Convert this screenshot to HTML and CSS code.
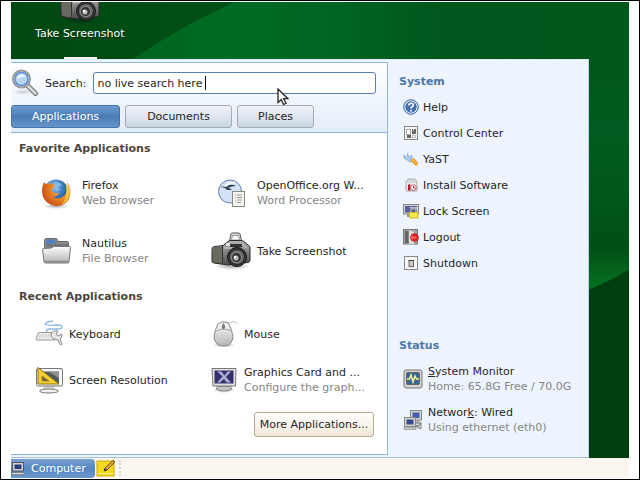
FILE: index.html
```html
<!DOCTYPE html>
<html lang="en">
<head>
<meta charset="utf-8">
<title>Computer menu</title>
<link rel="stylesheet" href="styles.css">
</head>
<body>
<svg class="defs" aria-hidden="true">
  <defs>
    <linearGradient id="g-metal" x1="0" y1="0" x2="0" y2="1"><stop offset="0" stop-color="#b5b5b2"/><stop offset="1" stop-color="#4a4a48"/></linearGradient>
    <linearGradient id="g-light" x1="0" y1="0" x2="0" y2="1"><stop offset="0" stop-color="#fdfdfd"/><stop offset="1" stop-color="#b4b4b2"/></linearGradient>
    <radialGradient id="g-blue" cx=".4" cy=".3" r=".8"><stop offset="0" stop-color="#8fc4ee"/><stop offset=".5" stop-color="#3b78bd"/><stop offset="1" stop-color="#142c63"/></radialGradient>
    <radialGradient id="g-fox" cx=".75" cy=".3" r=".9"><stop offset="0" stop-color="#fbe04a"/><stop offset=".4" stop-color="#f0902a"/><stop offset="1" stop-color="#c23c10"/></radialGradient>
    <radialGradient id="g-shade"><stop offset="0" stop-color="#000" stop-opacity=".35"/><stop offset="1" stop-color="#000" stop-opacity="0"/></radialGradient>
    <symbol id="camera" viewBox="0 0 40 40">
      <ellipse cx="21" cy="35" rx="18" ry="4" fill="url(#g-shade)"/>
      <path d="M18 12l2-9q.3-1 1.500-1h6q1.200 0 1.500 1l2 9z" fill="#d9d9d9" stroke="#555"/>
      <path d="M20.500 9l1-4.500h6l1 4.500z" fill="#fafafa" stroke="#888" stroke-width=".8"/>
      <path d="M1 18q0-2 2-2.300l9-1.200 5-4q1-1 3-1h10q2 0 3 1l4 3.500q2 1 2 3v12q0 2-2 2.500L17 34l-14-2q-2-.3-2-2z" fill="url(#g-metal)" stroke="#2a2a2a"/>
      <path d="M2 18q0-1.500 1.500-1.800L11 15.500v16.300L3.500 31Q2 30.700 2 29z" fill="#6b6a5e"/>
      <path d="M11.500 15v17" stroke="#333"/>
      <path d="M13 17h8M30 13l6 4" stroke="#d0d0d0"/>
      <rect x="15" y="12" width="4" height="3" fill="#e4e4e4"/>
      <path d="M19 13h12v3H19z" fill="#333"/>
      <circle cx="26" cy="26" r="9.500" fill="#3b3b3b" stroke="#161616"/>
      <circle cx="26" cy="26" r="7.500" fill="#6d6d6d" stroke="#222"/>
      <circle cx="25.500" cy="26.500" r="5" fill="#333" stroke="#999" stroke-width=".8"/>
      <circle cx="25" cy="27" r="2.500" fill="#bbb"/>
      <circle cx="24" cy="26" r="1.200" fill="#fff"/>
    </symbol>
  </defs>
</svg>

<div class="screen">
  <main class="desktop">
    <svg class="wallpaper" viewBox="0 0 618 456" preserveAspectRatio="none" aria-hidden="true">
      <defs>
        <linearGradient id="w-base" x1="0" y1="0" x2="1" y2="0"><stop offset="0" stop-color="#005a1a"/><stop offset=".35" stop-color="#006b23"/><stop offset=".6" stop-color="#006223"/><stop offset="1" stop-color="#00581c"/></linearGradient>
        <linearGradient id="w-dark" x1="0" y1="0" x2="1" y2="0"><stop offset="0" stop-color="#004812"/><stop offset="1" stop-color="#015018"/></linearGradient>
        <linearGradient id="w-fade" x1="0" y1="0" x2="1" y2="0"><stop offset="0" stop-color="#005019" stop-opacity="0"/><stop offset=".4" stop-color="#005019" stop-opacity=".6"/><stop offset="1" stop-color="#005019" stop-opacity=".2"/></linearGradient>
        <linearGradient id="w-side" x1="0" y1="0" x2="0" y2="1"><stop offset="0" stop-color="#00561b"/><stop offset=".3" stop-color="#005c20"/><stop offset=".6" stop-color="#00551a"/><stop offset=".78" stop-color="#005015"/><stop offset="1" stop-color="#077a22"/></linearGradient>
      </defs>
      <rect width="618" height="456" fill="url(#w-base)"/>
      <path d="M0 0H224Q170 24 122 57H0z" fill="url(#w-dark)"/>
      <rect x="330" width="288" height="60" fill="url(#w-fade)"/>
      <rect x="570" y="57" width="48" height="240" fill="url(#w-side)"/>
      <path d="M560 294Q600 280 618 267V456H560z" fill="#013f10"/>
    </svg>
    <a class="shortcut" href="#">
      <svg class="shortcut-icon"><use href="#camera"/></svg>
      <span>Take Screenshot</span>
    </a>
    <span class="drop-mark"></span>

    <section class="menu">
      <div class="apps">
        <header class="apps-head">
          <form class="search">
            <svg class="search-icon" viewBox="0 0 28 28" aria-hidden="true">
              <ellipse cx="12" cy="23" rx="10" ry="3" fill="url(#g-shade)" opacity=".5"/>
              <path d="M16.500 16.500l8 8" stroke="#777" stroke-width="5" stroke-linecap="round"/>
              <path d="M17 17l7.500 7.500" stroke="#ddd" stroke-width="2.500" stroke-linecap="round"/>
              <circle cx="10.500" cy="10" r="8.500" fill="#dcebfa" stroke="#999" stroke-width="2"/>
              <circle cx="10.500" cy="10" r="6.500" fill="#b9d5f3" stroke="#5d8ed0" stroke-width="1.500"/>
              <path d="M6 10q0-4 4.500-4.500 4 0 4 2-5 0-8.500 2.500z" fill="#eef6ff"/>
            </svg>
            <label for="q">Search:</label>
            <span class="field"><input id="q" type="text" value="no live search here"><i class="caret"></i></span>
          </form>
          <nav class="tabs">
            <button class="tab tab-apps active" type="button">Applications</button>
            <button class="tab tab-docs" type="button">Documents</button>
            <button class="tab tab-places" type="button">Places</button>
          </nav>
        </header>

        <h2>Favorite Applications</h2>
        <div class="tiles favorites">
          <a class="tile" href="#">
            <svg class="tile-icon" viewBox="0 0 40 40" aria-hidden="true">
              <ellipse cx="20" cy="33" rx="13" ry="3" fill="url(#g-shade)"/>
              <circle cx="20" cy="19" r="12.500" fill="url(#g-blue)"/>
              <path d="M18 10q5-2 8 2l-4 2 2 3-3 2q-3-5-3-9z" fill="#8cc4ea" opacity=".7"/>
              <path d="M8 9q1 2 3 2 3-1.500 6 .500l2 1q-1 3-4 4 1 3 4 3.500 2 .500 4-.500-1 4-6 4 5 4 11-.500 4-4 2-10 2 2 2 4 .500-5-2.500-9 5 4 5 11 0 9-7 12.500-7 3-14-.500-7-4-7.500-12Q6 13 8 9z" fill="url(#g-fox)"/>
              <path d="M30 11q4 4 3.500 10-1 8-8 10.500 5-6 5-12 0-5-.500-8.500z" fill="#fbdc4c" opacity=".7"/>
            </svg>
            <span class="tile-text"><b>Firefox</b><small>Web Browser</small></span>
          </a>
          <a class="tile" href="#">
            <svg class="tile-icon" viewBox="0 0 40 40" aria-hidden="true">
              <circle cx="19" cy="18.500" r="11.500" fill="#d3e2f6" stroke="#6582b3"/>
              <path d="M9 14q5 0 7 3l5 0q-2-2-4-2 4-2 8-2-5-3-10 1-3-1-6 0z" fill="#34424f"/>
              <path d="M14 13q4-4 10-3" stroke="#fff" stroke-width="1.500" fill="none"/>
              <rect x="21.500" y="18.500" width="12" height="15" fill="#f4f4f1" stroke="#8a8a84"/>
              <path d="M26 22h5M26 24.500h5M26 27h5M26 29.500h4M24 22h1M24 25h1M24 28h1" stroke="#999"/>
            </svg>
            <span class="tile-text"><b>OpenOffice.org W...</b><small>Word Processor</small></span>
          </a>
          <a class="tile" href="#">
            <svg class="tile-icon" viewBox="0 0 40 40" aria-hidden="true">
              <path d="M8.500 18V9.500q0-2 2-2h9q1.500 0 2 1.500l.500 1.500H31q1.500 0 1.500 1.500v6z" fill="#8b8b8b" stroke="#686868"/>
              <path d="M10 14V10q0-1.500 1.500-1.500h7.500l2 4h-6z" fill="#5280be"/>
              <path d="M10 16l1-3h21v4z" fill="#737373"/>
              <path d="M6.500 18.500q0-1 1-1l8-.500 2-1.500h16q1 0 1 1L33 30.500q0 1.500-1.500 1.500h-22Q8 32 8 30.500z" fill="url(#g-light)" stroke="#777"/>
              <path d="M8 30.500h25" stroke="#8b8b8b" stroke-width="1.500"/>
            </svg>
            <span class="tile-text"><b>Nautilus</b><small>File Browser</small></span>
          </a>
          <a class="tile" href="#">
            <svg class="tile-icon"><use href="#camera"/></svg>
            <span class="tile-text"><b>Take Screenshot</b></span>
          </a>
        </div>

        <h2>Recent Applications</h2>
        <div class="tiles recent">
          <a class="tile" href="#">
            <svg class="tile-icon" viewBox="0 0 28 28" aria-hidden="true">
              <path d="M12 12q-2-3 3-3h8q4 0 4-2t-5-2q-8 1-12-1 1-2 8-3" fill="none" stroke="#8fb9e6" stroke-width="1.300"/>
              <path d="M3.500 12.500H19l2 6.500q0 1-1 1H2q-1.500 0-1-1.500z" fill="#ededed" stroke="#999"/>
              <path d="M4 15h14M3.500 17h13" stroke="#c5c5c5" stroke-dasharray="2 1"/>
              <path d="M27 14l-4 2-2-2 2-3q-5-1-7 3 0 3 2 4.500l5 1.500 2 4.500q2 1 2-1l-2-4q2-2 2-5.500z" fill="#e8e8e8" stroke="#8b8b8b"/>
            </svg>
            <span class="tile-text"><b>Keyboard</b></span>
          </a>
          <a class="tile" href="#">
            <svg class="tile-icon" viewBox="0 0 28 28" aria-hidden="true">
              <ellipse cx="14" cy="25" rx="11" ry="2.500" fill="url(#g-shade)"/>
              <path d="M14 6q-1-5 3-4 3 2 6-.500 3-.500 4 3" fill="none" stroke="#c4c4c4"/>
              <path d="M8 4q5-4 11 0 3 7 4 12-.500 10-9.500 10T4 16Q5 9 8 4z" fill="url(#g-light)" stroke="#888"/>
              <path d="M6 11q8-3.500 16 0M13.500 3v7" fill="none" stroke="#aaa"/>
              <rect x="12" y="4" width="3" height="5" rx="1.500" fill="#777"/>
            </svg>
            <span class="tile-text"><b>Mouse</b></span>
          </a>
          <a class="tile" href="#">
            <svg class="tile-icon" viewBox="0 0 28 28" aria-hidden="true">
              <path d="M9 20h10l1 4H8z" fill="#d7d7d7"/>
              <ellipse cx="14" cy="25" rx="9.500" ry="2" fill="#f0f0f0" stroke="#777"/>
              <rect x="1.500" y="2.500" width="26" height="17.500" rx="1.500" fill="#f4f4f2" stroke="#777"/>
              <rect x="5" y="5.500" width="19" height="12" fill="#555a5c"/>
              <path d="M14 6h10v6z" fill="#8c9192"/>
              <path d="M3 1.500V18h21z" fill="#f3cf32" stroke="#8d7514"/>
              <path d="M7 10v5h7z" fill="#5a5b4c" stroke="#a88b1d"/>
            </svg>
            <span class="tile-text"><b>Screen Resolution</b></span>
          </a>
          <a class="tile" href="#">
            <svg class="tile-icon" viewBox="0 0 28 28" aria-hidden="true">
              <ellipse cx="14" cy="24" rx="11" ry="3" fill="url(#g-shade)"/>
              <path d="M8 20h12l2 3q-8 4-16 0z" fill="#c4c4c4" stroke="#888"/>
              <path d="M2 2.500h24L25.500 20H3z" fill="#e2e2e2" stroke="#777"/>
              <rect x="4.500" y="4.500" width="19" height="13" fill="#30306c"/>
              <path d="M7 5.500h4.500l3 4 3-4H21L16 11l5 5.500h-4.500L14 13l-4 3.500H7l5.500-6z" fill="#a9acd2"/>
            </svg>
            <span class="tile-text"><b>Graphics Card and ...</b><small>Configure the graph...</small></span>
          </a>
        </div>
        <button class="more" type="button">More Applications...</button>
      </div>

      <aside class="side">
        <h3>System</h3>
        <ul class="links">
          <li><a href="#"><svg viewBox="0 0 16 16" aria-hidden="true"><circle cx="8" cy="8" r="7.300" fill="#e3edf8" stroke="#3c62a0"/><circle cx="8" cy="8" r="5.700" fill="#416dae"/><path d="M5.800 6.500q0-2.300 2.300-2.300t2.200 2q0 1-1.200 1.600T8 9.500" fill="none" stroke="#fff" stroke-width="1.600"/><circle cx="8" cy="11.700" r="1" fill="#fff"/></svg>Help</a></li>
          <li><a href="#"><svg viewBox="0 0 16 16" aria-hidden="true"><rect x="1.500" y="1.500" width="13" height="13" fill="#f6f6f6" stroke="#888"/><rect x="3.500" y="4.500" width="4" height="5" fill="#fff" stroke="#aaa"/><path d="M9 4h4v5H9zM4 10h4v3H4z" fill="#666"/><path d="M9.500 10.500h3v2h-3z" stroke="#bbb" fill="#fff"/><path d="M10 4h1v2h-1z" fill="#ddd"/></svg>Control Center</a></li>
          <li><a href="#"><svg viewBox="0 0 16 16" aria-hidden="true"><path d="M5 1.500L4.500 4l2 1.500L9 4.500Q9.500 7.500 7.500 8.500L9 10l-2 1.500L4.500 9Q0 8.500 1 4l2 2" fill="#a9cbed" stroke="#7fa9d6" stroke-width=".8"/><path d="M7.500 9.500l3-2.500 4 4.500q1 2-.500 2.500-2 .800-3-1z" fill="#f2b03c" stroke="#dc9c3a" stroke-width=".8"/></svg>YaST</a></li>
          <li><a href="#"><svg viewBox="0 0 16 16" aria-hidden="true"><path d="M3 5l2-3h7l2 3v9H3z" fill="#ebebeb" stroke="#aaa"/><path d="M3 5h11M5 3h8" stroke="#c0c0c0"/><path d="M5 7.500h2.500v6H5z" fill="#b91c2b"/><circle cx="10.500" cy="10.500" r="2.800" fill="#fff" stroke="#bd6068"/><path d="M10.500 9v2h2" stroke="#a42331" fill="none"/></svg>Install Software</a></li>
          <li><a href="#"><svg viewBox="0 0 16 16" aria-hidden="true"><path d="M4 10h5v4H4z" fill="#999"/><rect x=".5" y="1.500" width="15" height="9.500" fill="#d3d3d3" stroke="#888"/><rect x="2" y="3" width="12" height="6.500" fill="#565c94"/><path d="M6 4h8v2H8z" fill="#b4b9d4"/><path d="M8 9V7.500q0-2 2.500-2t2.500 2V9" fill="none" stroke="#aaa" stroke-width="1.500"/><rect x="6.500" y="9.500" width="8.500" height="5.500" fill="#f4e44e" stroke="#d4bd2a"/></svg>Lock Screen</a></li>
          <li><a href="#"><svg viewBox="0 0 16 16" aria-hidden="true"><rect x=".5" y=".5" width="14" height="14.500" fill="#a6a6a6" stroke="#777"/><path d="M2 2h3.500v12H2z" fill="#666"/><path d="M6 1l5 2v12H6z" fill="#ddd"/><circle cx="11.500" cy="8.500" r="4.300" fill="#d92223"/><path d="M7.500 8.500L10 6v1.500h3.500v2H10V11z" fill="#f16a62"/></svg>Logout</a></li>
          <li><a href="#"><svg viewBox="0 0 16 16" aria-hidden="true"><rect x="1.500" y="1.500" width="13" height="13" fill="#f6f6f6" stroke="#888"/><rect x="6" y="5.500" width="4.500" height="6" fill="#ccc" stroke="#666"/><path d="M5.500 5.500h5.500" stroke="#444"/></svg>Shutdown</a></li>
        </ul>
        <h3>Status</h3>
        <ul class="status">
          <li><a href="#">
            <svg viewBox="0 0 20 20" aria-hidden="true"><rect x="1" y="1" width="18" height="18" rx="2" fill="#d4d4d2" stroke="#777"/><rect x="3.500" y="3.500" width="13" height="12" rx="1" fill="#39658f" stroke="#666"/><path d="M4 10h2.500L8 6l2 7 2-6 1.500 3H16" fill="none" stroke="#f0f29a" stroke-width="1.500"/></svg>
            <span class="tile-text"><b><u>S</u>ystem Monitor</b><small>Home: 65.8G Free / 70.0G</small></span>
          </a></li>
          <li><a href="#">
            <svg viewBox="0 0 20 20" aria-hidden="true"><rect x="7.500" y=".5" width="11" height="9.500" fill="#d3d3d3" stroke="#888"/><rect x="9.500" y="2.500" width="7" height="5.500" fill="#3e5eaa"/><path d="M12 10h5v2h-5z" fill="#aaa"/><path d="M13 17q5-4 5 0t-5-2M13 13h5v2" fill="none" stroke="#888" stroke-width="1.300"/><rect x="1.500" y="7.500" width="11" height="9" fill="#d3d3d3" stroke="#888"/><rect x="3.500" y="9.500" width="7" height="5" fill="#394a8c"/><path d="M1 17.500h12v2H1z" fill="#c9c9c9" stroke="#888" stroke-width=".6"/></svg>
            <span class="tile-text"><b>Networ<u>k</u>: Wired</b><small>Using ethernet (eth0)</small></span>
          </a></li>
        </ul>
      </aside>
    </section>
    <svg class="pointer" viewBox="0 0 12 18" aria-hidden="true"><path d="M1 1v13.500l3.200-3 2.300 5 2.500-1.200-2.300-4.600H11z" fill="#fff" stroke="#222" stroke-width="1.300"/></svg>
  </main>

  <footer class="panel">
    <button class="computer" type="button">
      <svg viewBox="0 0 14 14" aria-hidden="true"><rect x="1.500" y="1.500" width="11" height="8.500" fill="#d4d4d4" stroke="#555"/><rect x="3.500" y="3.500" width="7" height="4.500" fill="#2c3e78"/><path d="M1 11.500h12v2H.5z" fill="#ddd" stroke="#666" stroke-width=".6"/></svg>
      Computer
    </button>
    <button class="note" type="button" aria-label="Notes">
      <svg viewBox="0 0 20 18" aria-hidden="true"><rect x="1" y="2" width="17" height="15" fill="#f6d91e" stroke="#c9a910"/><path d="M2 14.500h15" stroke="#fdf08b"/><path d="M8 12l1-3 8-7.500L19 3l-8 8z" fill="#e0a52e" stroke="#4a3c18" stroke-width=".8"/><path d="M8 12l1-2.500L11 11z" fill="#222"/></svg>
    </button>
    <span class="grip"></span>
  </footer>
</div>
</body>
</html>
```
FILE: styles.css
```css
* { box-sizing: border-box; }

body {
  margin: 0;
  min-height: 100vh;
  display: flex;
  padding: 1px 10px;
  border: 1px solid #000;
  background: #fff;
  color: #262626;
  font: 11px/15px "DejaVu Sans", sans-serif;
}

a { color: inherit; text-decoration: none; }
button, input { font: inherit; color: inherit; }
ul { margin: 0; padding: 0; list-style: none; }
svg { display: block; flex: none; }
.defs { position: absolute; width: 0; height: 0; }

.screen { flex: 1; display: flex; flex-direction: column; }

/* Desktop */
.desktop {
  position: relative;
  flex: 1;
  display: flex;
  padding: 57px 40px 0 0;
  overflow: hidden;
}
.wallpaper { position: absolute; inset: 0; width: 100%; height: 100%; }
.shortcut {
  position: absolute;
  left: 24px;
  top: -17px;
  display: flex;
  flex-direction: column;
  align-items: center;
  gap: 1px;
  color: #fff;
  text-shadow: 1px 1px 1px #002a08;
}
.shortcut-icon { width: 40px; height: 40px; }
.drop-mark { position: absolute; left: 53px; top: 55px; width: 33px; height: 2px; background: #eef5f0; }
.pointer { position: absolute; left: 266px; top: 86px; width: 12px; height: 18px; }

/* Menu */
.menu {
  position: relative;
  flex: 1;
  display: flex;
  border-top: 1px solid #dcebf8;
  border-bottom: 1px solid #9fc0d8;
  border-right: 1px solid #b9d4ea;
  background: #edf4fe;
}
.apps {
  flex: 1;
  display: flex;
  flex-direction: column;
  margin: 2px 0;
  border: solid #8fb4dc;
  border-width: 1px 1px 1px 0;
  background: #fff;
}
.apps-head {
  padding: 6px 11px 4px 0;
  border-bottom: 1px solid #8fb4dc;
  background: linear-gradient(#fdfeff, #f1f6fd 50%, #e3edf9);
}
.search { display: flex; align-items: center; gap: 6px; }
.search-icon { width: 28px; height: 28px; }
.field { position: relative; flex: 1; display: flex; }
.field input {
  width: 100%;
  height: 22px;
  padding: 0 4px;
  border: 1px solid #5580b0;
  border-radius: 3px;
  background: #fff;
  outline: none;
}
.caret { position: absolute; left: 112px; top: 4px; width: 1px; height: 14px; background: #000; }
.tabs { display: flex; gap: 5px; margin-top: 8px; }
.tab {
  height: 23px;
  padding: 0;
  border: 1px solid #a3abb8;
  border-radius: 3px;
  background: linear-gradient(#eff3f8, #dfe6ef 50%, #c8d3e1);
}
.tab-apps { width: 109px; }
.tab-docs { width: 107px; }
.tab-places { width: 77px; }
.tab.active {
  border-color: #4473aa;
  background: linear-gradient(#6c9bcd, #4a7cb6 50%, #6595ca);
  color: #fff;
}

h2, h3 { margin: 0; font-size: 11px; line-height: 16px; }
h2 { padding-left: 8px; color: #4c473c; }
.apps-head + h2 { margin-top: 8px; }
h3 { color: #4b77ac; }

.tiles { display: grid; grid-template-columns: 175px 1fr; }
.tile { display: flex; align-items: center; gap: 6px; }
.tile-text { display: flex; flex-direction: column; white-space: nowrap; }
.tile-text b { font-weight: normal; }
.tile-text small { font-size: 11px; color: #868686; }

.favorites { padding: 7px 0 9px 25px; }
.favorites .tile { height: 58px; }
.tile-icon { width: 40px; height: 40px; }
.recent { padding: 6px 0 0 24px; }
.recent .tile { height: 46px; }
.recent .tile-icon { width: 28px; height: 28px; }

.more {
  align-self: flex-end;
  height: 25px;
  width: 120px;
  margin: 9px 13px 17px;
  padding: 0;
  border: 1px solid #b8ab92;
  border-radius: 3px;
  background: linear-gradient(#fffefc, #f7f2e8 60%, #eee6d6);
  white-space: nowrap;
}

/* System side */
.side { width: 200px; padding: 14px 0 17px 11px; display: flex; flex-direction: column; }
.links { flex: 1; padding: 4px 0 0 4px; }
.links a { display: flex; align-items: center; gap: 4px; height: 26px; }
.links svg { width: 16px; height: 16px; }
.status { padding: 4px 0 0 4px; }
.status a { display: flex; align-items: center; gap: 5px; height: 41px; }
.status svg { width: 20px; height: 20px; }

/* Bottom panel */
.panel { display: flex; align-items: center; height: 20px; background: #faf6ef; }
.computer {
  display: flex;
  align-items: center;
  gap: 6px;
  width: 84px;
  height: 19px;
  padding: 0;
  border: 0;
  border-radius: 0 4px 4px 0;
  background: linear-gradient(#77a3d3, #5586bf 50%, #6a99cd);
  color: #fff;
}
.computer svg { width: 14px; height: 14px; }
.note { padding: 0; border: 0; margin-left: 1px; background: none; }
.note svg { width: 20px; height: 18px; }
.grip { height: 16px; margin-left: 3px; border-left: 2px dotted #ddd6c8; }
```
